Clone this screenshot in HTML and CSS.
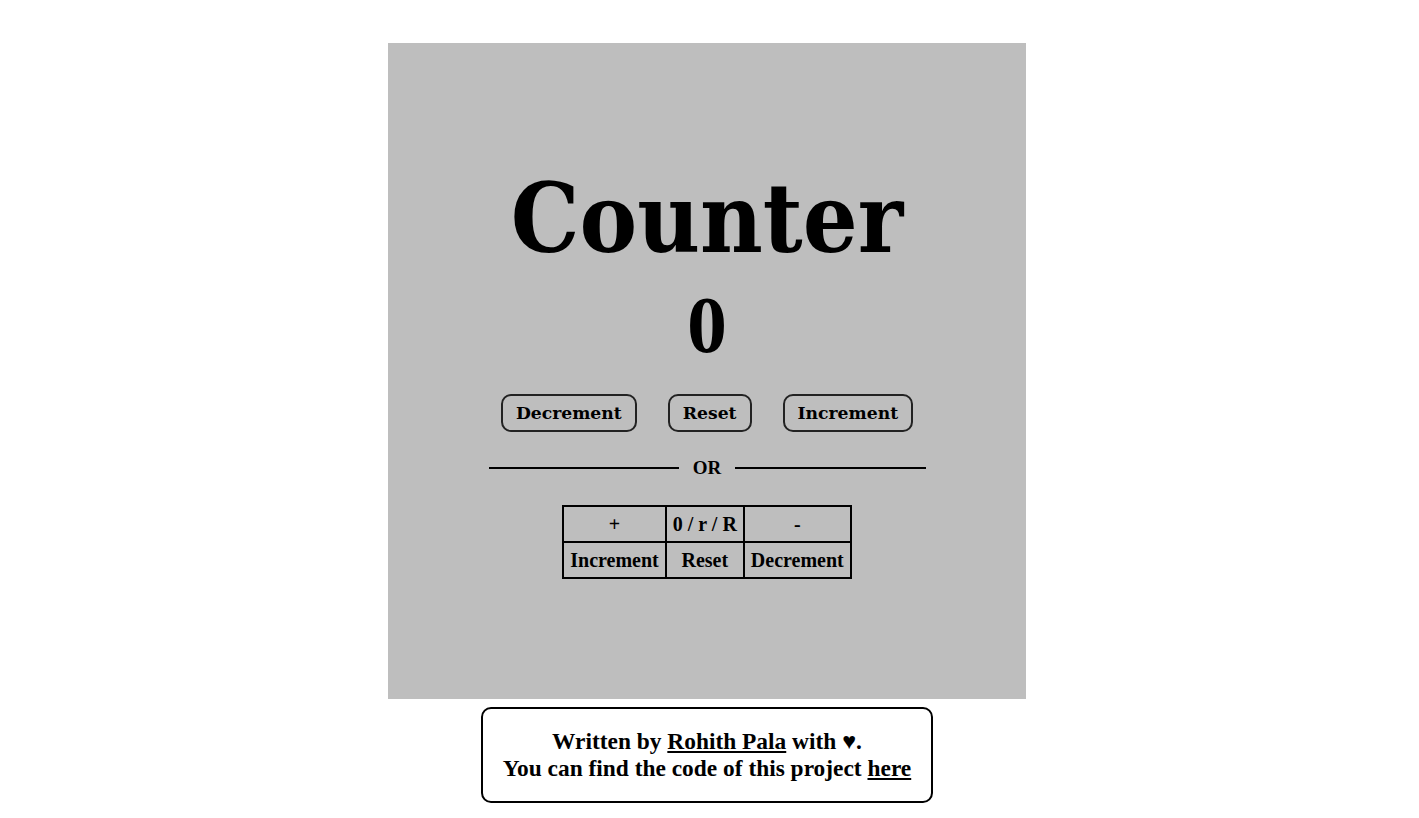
FILE: index.html
```html
<!DOCTYPE html>
<html>
<head>
<meta charset="utf-8">
<link rel="stylesheet" href="styles.css">
</head>
<body>
<div class="page">
  <main class="card">
    <h1 class="title">Counter</h1>
    <div class="count">0</div>
    <div class="buttons">
      <button class="btn">Decrement</button>
      <button class="btn">Reset</button>
      <button class="btn">Increment</button>
    </div>
    <div class="divider"><span class="line"></span><span class="or">OR</span><span class="line"></span></div>
    <table class="keys">
      <tr><td>+</td><td>0 / r / R</td><td>-</td></tr>
      <tr><td>Increment</td><td>Reset</td><td>Decrement</td></tr>
    </table>
  </main>
  <footer class="footer">
    Written by <a href="#">Rohith Pala</a> with ♥.<br>
    You can find the code of this project <a href="#">here</a>
  </footer>
</div>
</body>
</html>
```

FILE: styles.css
```css
html, body {
  margin: 0;
  padding: 0;
  background: #ffffff;
}
body {
  font-family: "Liberation Serif", "Times New Roman", serif;
  color: #000;
}
.page {
  display: flex;
  flex-direction: column;
  align-items: center;
  padding-top: 43px;
  padding-right: 5px;
}
.card {
  width: 638px;
  height: 656px;
  box-sizing: border-box;
  background: #bebebe;
  display: flex;
  flex-direction: column;
  align-items: center;
  padding-top: 115.5px;
}
.title {
  margin: 0;
  font-family: "DejaVu Serif Condensed", "DejaVu Serif", serif;
  font-stretch: condensed;
  font-size: 96px;
  font-weight: bold;
  line-height: 120.5px;
}
.count {
  font-size: 80px;
  font-weight: bold;
  line-height: 92px;
}
.buttons {
  display: flex;
  gap: 31px;
  margin-top: 23px;
}
.btn {
  font-family: "DejaVu Serif", serif;
  font-weight: bold;
  font-size: 17.2px;
  background: transparent;
  border: 2px solid #222;
  border-radius: 10px;
  padding: 0 13px;
  height: 38px;
  color: #000;
}
.divider {
  display: flex;
  align-items: center;
  width: 437px;
  margin-top: 25px;
  gap: 14px;
}
.line {
  flex: 1;
  height: 2px;
  background: #000;
}
.or {
  font-weight: bold;
  font-size: 19px;
  line-height: 22px;
}
.keys {
  margin-top: 26px;
  border: 1px solid #000;
  border-spacing: 0;
  font-size: 20px;
  font-weight: bold;
}
.keys td {
  border: 1px solid #000;
  padding: 6px;
  text-align: center;
  line-height: 22px;
}
.footer {
  margin-top: 8px;
  border: 2px solid #000;
  border-radius: 10px;
  padding: 19px 20px;
  font-size: 23.4px;
  font-weight: bold;
  text-align: center;
  line-height: 27px;
}
.footer a {
  color: #000;
}
```
